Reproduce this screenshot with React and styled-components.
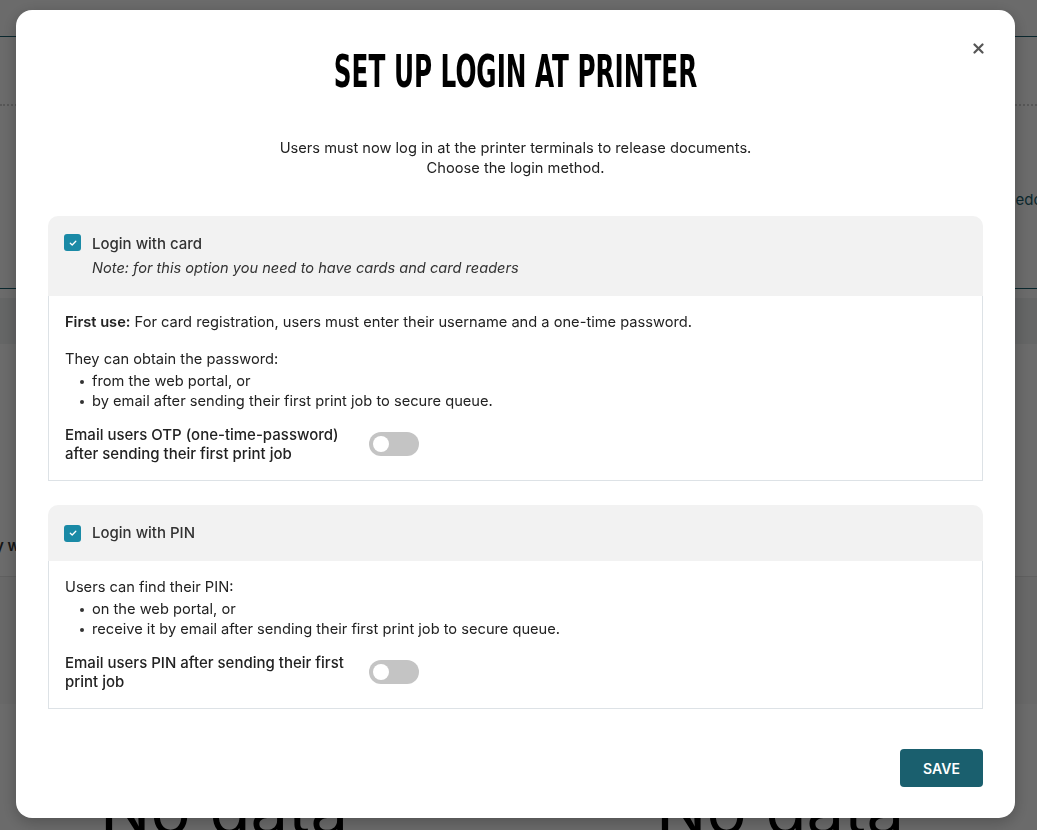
import styled, { createGlobalStyle } from 'styled-components';

const GlobalStyle = createGlobalStyle`
  html, body {
    margin: 0;
    padding: 0;
  }

  body {
    width: 1037px;
    height: 830px;
    overflow: hidden;
    font-family: Inter, "Noto Sans", sans-serif;
    color: #222;
    background: #fff;
  }
`;

const cardOptions = [
  {
    key: 'card',
    title: 'Login with card',
    note: 'Note: for this option you need to have cards and card readers',
    lead: 'For card registration, users must enter their username and a one-time password.',
    intro: 'They can obtain the password:',
    bullets: ['from the web portal, or', 'by email after sending their first print job to secure queue.'],
    toggleLabel: 'Email users OTP (one-time-password) after sending their first print job',
  },
  {
    key: 'pin',
    title: 'Login with PIN',
    intro: 'Users can find their PIN:',
    bullets: ['on the web portal, or', 'receive it by email after sending their first print job to secure queue.'],
    toggleLabel: 'Email users PIN after sending their first print job',
  },
];

const CheckIcon = () => (
  <svg width="10" height="10" viewBox="0 0 10 10" fill="none">
    <path d="M2.3 5.2 L4.2 7 L7.8 3.2" stroke="#fff" strokeWidth="1.3" strokeLinecap="round" strokeLinejoin="round" />
  </svg>
);

const CloseIcon = () => (
  <svg width="11" height="11" viewBox="0 0 11 11">
    <path d="M1.5 1.5 L9.5 9.5 M9.5 1.5 L1.5 9.5" stroke="#555" strokeWidth="2.2" strokeLinecap="round" />
  </svg>
);

const App = () => (
  <>
    <GlobalStyle />
    <Page>
      <PageHeader />
      <PageToolbar>
        <RightLink>edoc</RightLink>
      </PageToolbar>
      <PageBand />
      <PageRow>
        <LeftText>y w</LeftText>
      </PageRow>
      <PageSection />
      <EmptyRow>
        <EmptyText>No data</EmptyText>
        <EmptyText>No data</EmptyText>
      </EmptyRow>
    </Page>
    <Overlay>
      <Modal>
        <CloseButton aria-label="Close">
          <CloseIcon />
        </CloseButton>
        <Title>SET UP LOGIN AT PRINTER</Title>
        <Lead>
          Users must now log in at the printer terminals to release documents.
          <br />
          Choose the login method.
        </Lead>
        <Options>
          {cardOptions.map((option) => (
            <OptionCard key={option.key}>
              <OptionHeader $withNote={!!option.note}>
                <Checkbox>
                  <CheckIcon />
                </Checkbox>
                <HeaderText>
                  <OptionTitle>{option.title}</OptionTitle>
                  {option.note && <OptionNote>{option.note}</OptionNote>}
                </HeaderText>
              </OptionHeader>
              <OptionBody>
                {option.lead && (
                  <Paragraph>
                    <strong>First use:</strong> {option.lead}
                  </Paragraph>
                )}
                <Intro>{option.intro}</Intro>
                <Bullets>
                  {option.bullets.map((item) => (
                    <li key={item}>{item}</li>
                  ))}
                </Bullets>
                <ToggleRow>
                  <ToggleLabel>{option.toggleLabel}</ToggleLabel>
                  <Toggle>
                    <Knob />
                  </Toggle>
                </ToggleRow>
              </OptionBody>
            </OptionCard>
          ))}
        </Options>
        <Footer>
          <SaveButton>SAVE</SaveButton>
        </Footer>
      </Modal>
    </Overlay>
  </>
);

export default App;

const Page = styled.div`
  height: 830px;
  display: flex;
  flex-direction: column;
  background: #fff;
`;

const PageHeader = styled.div`
  height: 36px;
  flex-shrink: 0;
  border-bottom: 1px solid #1a5f6e;
`;

const PageToolbar = styled.div`
  height: 185px;
  flex-shrink: 0;
  margin-top: 67px;
  display: flex;
  justify-content: flex-end;
  padding-top: 84px;
  box-sizing: border-box;
  border-top: 2px dotted #cfcfcf;
  border-bottom: 1px solid #1a5f6e;
`;

const RightLink = styled.span`
  margin-right: -14px;
  font-size: 15px;
  line-height: 20px;
  color: #1a5f6e;
`;

const PageBand = styled.div`
  height: 46px;
  flex-shrink: 0;
  margin-top: 9px;
  background: #f0f2f3;
`;

const PageRow = styled.div`
  height: 232px;
  flex-shrink: 0;
  display: flex;
  align-items: center;
  padding-top: 170px;
  box-sizing: border-box;
`;

const LeftText = styled.span`
  margin-left: -5px;
  font-size: 15px;
  font-weight: 600;
  color: #333;
`;

const PageSection = styled.div`
  height: 127px;
  flex-shrink: 0;
  background: #f7f7f7;
  border-top: 1px solid #e4e4e4;
`;

const EmptyRow = styled.div`
  display: flex;
  gap: 308px;
  padding-left: 100px;
  padding-top: 72px;
`;

const EmptyText = styled.span`
  font-size: 67px;
  line-height: 1;
  color: #000;
`;

const Overlay = styled.div`
  position: fixed;
  inset: 0;
  background: rgba(0, 0, 0, 0.58);
`;

const Modal = styled.div`
  position: absolute;
  left: 16px;
  top: 10px;
  width: 999px;
  height: 808px;
  box-sizing: border-box;
  padding: 39px 32px 0;
  background: #fff;
  border-radius: 16px;
  box-shadow: 0 4px 16px rgba(0, 0, 0, 0.25);
`;

const CloseButton = styled.button`
  position: absolute;
  top: 28px;
  right: 27px;
  width: 20px;
  height: 20px;
  padding: 0;
  display: flex;
  align-items: center;
  justify-content: center;
  border: none;
  background: none;
`;

const Title = styled.h1`
  margin: 0;
  text-align: center;
  font-family: "DejaVu Sans Condensed", "DejaVu Sans", sans-serif;
  font-stretch: condensed;
  font-weight: 700;
  font-size: 45px;
  line-height: 46px;
  color: #000;
  transform: scaleX(0.61);
`;

const Lead = styled.p`
  margin: 43px 0 0;
  text-align: center;
  font-size: 14.65px;
  line-height: 20px;
  color: #222;
`;

const Options = styled.div`
  margin-top: 38px;
  display: flex;
  flex-direction: column;
  gap: 24px;
`;

const OptionCard = styled.div`
  border-radius: 10px 10px 0 0;
  overflow: hidden;
`;

const OptionHeader = styled.div`
  display: flex;
  align-items: ${({ $withNote }) => ($withNote ? 'flex-start' : 'center')};
  gap: 11px;
  padding: 18px 16px;
  background: #f2f2f2;
`;

const Checkbox = styled.span`
  width: 17px;
  height: 17px;
  flex-shrink: 0;
  display: flex;
  align-items: center;
  justify-content: center;
  border-radius: 3px;
  background: #1a8aa6;
`;

const HeaderText = styled.div`
  display: flex;
  flex-direction: column;
  gap: 4px;
`;

const OptionTitle = styled.span`
  font-size: 15px;
  line-height: 20px;
  font-weight: 500;
  color: #333;
`;

const OptionNote = styled.span`
  font-size: 14.6px;
  line-height: 20px;
  font-style: italic;
  color: #333;
`;

const OptionBody = styled.div`
  padding: 16px 16px 17px;
  border: 1px solid #dde2e6;
  border-top: none;
  font-size: 14.65px;
  line-height: 20px;
  color: #222;
`;

const Paragraph = styled.p`
  margin: 0 0 17px;

  strong {
    font-weight: 600;
  }
`;

const Intro = styled.p`
  margin: 0 0 2px;
`;

const Bullets = styled.ul`
  margin: 0;
  padding-left: 27px;
  list-style: none;

  li {
    position: relative;
  }

  li::before {
    content: '';
    position: absolute;
    left: -12px;
    top: 9px;
    width: 4px;
    height: 4px;
    border-radius: 50%;
    background: #333;
  }
`;

const ToggleRow = styled.div`
  margin-top: 14px;
  display: flex;
  align-items: center;
  gap: 14px;
`;

const ToggleLabel = styled.span`
  width: 290px;
  font-size: 15px;
  font-weight: 500;
  line-height: 19px;
  color: #222;
`;

const Toggle = styled.span`
  width: 50px;
  height: 24px;
  display: flex;
  align-items: center;
  padding: 0 4px;
  box-sizing: border-box;
  border-radius: 12px;
  background: #c4c4c4;
`;

const Knob = styled.span`
  width: 16px;
  height: 16px;
  border-radius: 50%;
  background: #fff;
`;

const Footer = styled.div`
  margin-top: 40px;
  display: flex;
  justify-content: flex-end;
`;

const SaveButton = styled.button`
  width: 83px;
  height: 38px;
  border: none;
  border-radius: 4px;
  background: #1a5f6e;
  color: #fff;
  font-family: Inter, sans-serif;
  font-size: 14px;
  font-weight: 600;
`;
